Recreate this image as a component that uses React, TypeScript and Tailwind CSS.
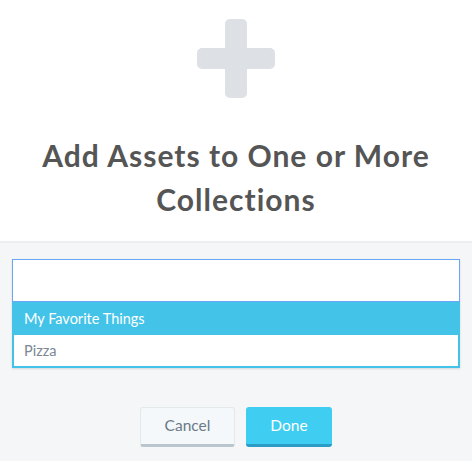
export default function App() {
  return (
    <div className="w-[472px] h-[461px] flex flex-col bg-[#f5f6f8] font-['Lato','Noto_Sans',sans-serif] overflow-hidden">
      {/* Header */}
      <div className="bg-white h-[243px] flex flex-col items-center pt-[19px] border-b-2 border-[#eceef0]">
        <svg width="78" height="79" viewBox="0 0 78 79">
          <rect x="28" y="0" width="22" height="79" rx="5" fill="#dde1e5" />
          <rect x="0" y="29" width="78" height="21" rx="5" fill="#dde1e5" />
        </svg>
        <h1 className="mt-[35px] text-[30px] leading-[44px] font-bold text-[#555555] text-center tracking-[1px]">
          Add Assets to One or More
          <br />
          Collections
        </h1>
      </div>

      {/* Picker */}
      <div className="px-3 pt-[16px]">
        <div className="bg-white shadow-[0_1px_2px_rgba(0,0,0,0.12)]">
          <div className="h-[43px] border border-[#6aa5f7]" />
          <div className="border-x-2 border-b-2 border-[#44c3e8]">
            <div className="h-[33px] bg-[#44c3e8] text-white text-[14.5px] flex items-center -mx-[2px] pl-[12px]">
              My Favorite Things
            </div>
            <div className="h-[31px] text-[#7b8794] text-[14.5px] flex items-center pl-[10px]">
              Pizza
            </div>
          </div>
        </div>
      </div>

      {/* Actions */}
      <div className="flex justify-center gap-[11px] pt-[39px]">
        <button className="w-[95px] h-[40px] rounded-[3px] bg-[#f4f8fa] border border-[#e3e8eb] border-b-[3px] border-b-[#b9c6ce] text-[#6b7a88] text-[15.5px]">
          Cancel
        </button>
        <button className="w-[86px] h-[40px] rounded-[3px] bg-[#3fcdf1] border-b-[3px] border-b-[#2a9cc6] text-white text-[15.5px]">
          Done
        </button>
      </div>
    </div>
  )
}
